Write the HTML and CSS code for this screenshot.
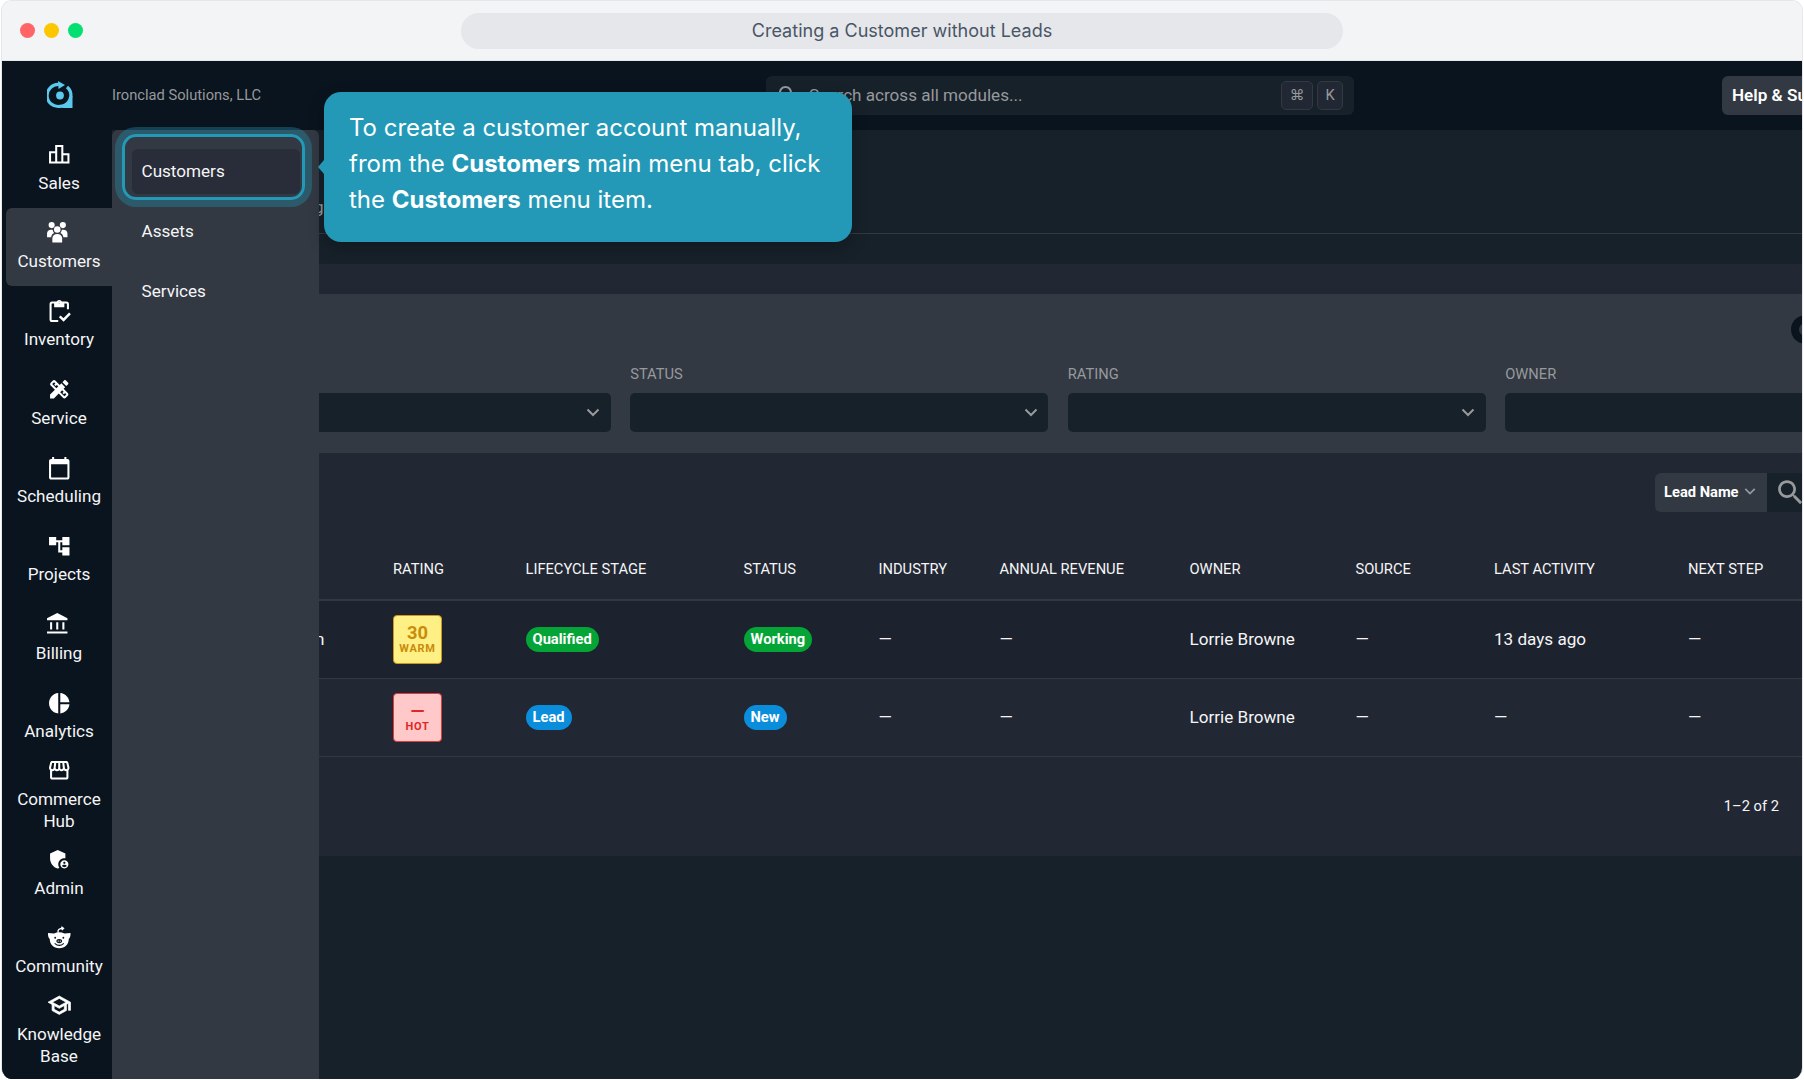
FILE: index.html
```html
<!DOCTYPE html>
<html lang="en">
<head>
  <meta charset="UTF-8" />
  <meta name="viewport" content="width=device-width, initial-scale=1.0" />
  <title>Creating a Customer without Leads</title>
  <link rel="stylesheet" href="styles.css">
</head>
<body>
  <div class="window">
    <div class="titlebar">
      <div class="dots">
        <span class="dot red"></span>
        <span class="dot yellow"></span>
        <span class="dot green"></span>
      </div>
      <div class="address">Creating a Customer without Leads</div>
    </div>

    <div class="app">
      <nav class="sidebar">
        <div class="logo">
          <svg width="26" height="28" viewBox="0 0 26 28">
            <path d="M12 3.500 A11 11 0 1 0 13 25.300 A11 11 0 0 0 20 6" fill="none" stroke="#5bc8ee" stroke-width="3.200" />
            <path d="M11 0 L18 4 L11.500 8 Z" fill="#5bc8ee" />
            <path d="M25.500 15V27H13Q22 25.500 23.500 15z" fill="#5bc8ee" />
            <circle cx="13" cy="14.500" r="3.900" fill="#5bc8ee" />
          </svg>
        </div>
        <a class="nav-item">
          <svg class="icon" viewBox="0 0 24 24"><path d="M16 11V3H8v6H2v12h20V11h-6zm-6-6h4v14h-4V5zm-6 6h4v8H4v-8zm16 8h-4v-6h4v6z" /></svg>
          <span>Sales</span>
        </a>
        <a class="nav-item active">
          <svg class="icon people" viewBox="0 0 24 24">
            <circle cx="6.500" cy="5" r="3" />
            <circle cx="17.500" cy="5" r="3" />
            <path d="M2 17v-3.500C2 11 3.600 9.500 6 9.500h1.500C7.800 11 8.300 12 9 12.700 7 13.500 6.200 15 6 17zM22 17v-3.500c0-2.500-1.600-4-4-4h-1.500c-.3 1.500-.8 2.500-1.500 3.200 2 .8 2.800 2.300 3 4.300z" />
            <circle cx="12" cy="9.200" r="3.200" />
            <path d="M7.200 22v-3.800c0-2.700 1.900-4.400 4.800-4.400s4.800 1.700 4.800 4.400V22z" />
          </svg>
          <span>Customers</span>
        </a>
        <a class="nav-item">
          <svg class="icon" viewBox="0 0 24 24">
            <path d="M11 21.500H5a1.500 1.500 0 0 1-1.500-1.500V5A1.500 1.500 0 0 1 5 3.500h14A1.500 1.500 0 0 1 20.500 5v5" fill="none" stroke="#fff" stroke-width="2" />
            <path d="M7 3.500h2.500a2.500 2.500 0 0 1 5 0H17V8H7zM12 2.500a1 1 0 1 0 0 2 1 1 0 0 0 0-2z" fill-rule="evenodd" />
            <path d="M12.500 17l3.700 3.500 6.300-6.500" fill="none" stroke="#fff" stroke-width="2.400" />
          </svg>
          <span>Inventory</span>
        </a>
        <a class="nav-item">
          <svg class="icon" viewBox="0 0 24 24"><path d="M16.240 11.510l1.570-1.570-3.750-3.750-1.570 1.570-4.140-4.130c-.78-.78-2.050-.78-2.830 0l-1.900 1.900c-.78.78-.78 2.050 0 2.830l4.130 4.130L3 17.250V21h3.750l4.760-4.760 4.130 4.130c.95.95 2.230.6 2.830 0l1.900-1.900c.78-.78.78-2.050 0-2.830l-4.130-4.130zm-7.060-.44L5.040 6.940l1.890-1.900L8.200 6.310 7.020 7.500l1.410 1.410 1.190-1.190 1.450 1.450-1.890 1.900zm7.880 7.890l-4.130-4.130 1.900-1.900 1.450 1.450-1.190 1.190 1.410 1.410 1.190-1.190 1.270 1.270-1.900 1.900zM20.710 7.040c.39-.39.39-1.020 0-1.410l-2.340-2.340c-.47-.47-1.120-.29-1.410 0l-1.830 1.830 3.750 3.750 1.830-1.830z" /></svg>
          <span>Service</span>
        </a>
        <a class="nav-item">
          <svg class="icon" viewBox="0 0 24 24"><path d="M20 3h-1V1h-2v2H7V1H5v2H4c-1.100 0-2 .9-2 2v16c0 1.100.9 2 2 2h16c1.100 0 2-.9 2-2V5c0-1.100-.9-2-2-2zm0 18H4V8h16v13z" /></svg>
          <span>Scheduling</span>
        </a>
        <a class="nav-item">
          <svg class="icon" viewBox="0 0 24 24"><path d="M22 11V3h-7v3H9V3H2v8h7V8h2v10h4v3h7v-8h-7v3h-2V8h2v3z" /></svg>
          <span>Projects</span>
        </a>
        <a class="nav-item">
          <svg class="icon bank" viewBox="0 0 24 24"><path d="M12 2L2 7v2h20V7zM5 11h2v7H5zM11 11h2v7h-2zM17 11h2v7h-2zM2 20h20v2H2z" /></svg>
          <span>Billing</span>
        </a>
        <a class="nav-item">
          <svg class="icon" viewBox="0 0 24 24"><path d="M11 2v20c-5.070-.5-9-4.790-9-10s3.930-9.500 9-10zm2.030 0v8.990H22c-.47-4.740-4.240-8.520-8.970-8.990zm0 11.010V22c4.740-.47 8.500-4.250 8.970-8.990h-8.970z" /></svg>
          <span>Analytics</span>
        </a>
        <a class="nav-item two-line">
          <svg class="icon" viewBox="0 0 24 24"><path d="M21.900 8.890l-1.050-4.370c-.22-.9-1-1.520-1.910-1.520H5.050c-.9 0-1.690.63-1.900 1.520L2.100 8.890c-.24 1.020-.02 2.060.62 2.880.08.11.19.19.28.29V19c0 1.100.9 2 2 2h14c1.100 0 2-.9 2-2v-6.940c.09-.09.2-.18.28-.28.64-.82.87-1.870.62-2.890zm-2.990-3.900l1.050 4.370c.1.42.01.84-.25 1.170-.14.18-.44.47-.94.47-.61 0-1.140-.49-1.210-1.140L16.980 5l1.930-.01zM13 5h1.960l.54 4.520c.05.39-.07.78-.33 1.070-.22.26-.54.41-.95.41-.67 0-1.220-.59-1.220-1.310V5zM8.490 9.520L9.040 5H11v4.690c0 .72-.55 1.310-1.290 1.310-.34 0-.65-.15-.89-.41-.25-.29-.37-.68-.33-1.070zm-4.450-.16L5.050 5h1.970l-.58 4.860c-.08.65-.6 1.140-1.210 1.140-.49 0-.8-.29-.93-.47-.27-.32-.36-.75-.26-1.170zM5 19v-6.030c.08.010.15.030.23.030.87 0 1.660-.36 2.240-.95.6.6 1.400.95 2.310.95.87 0 1.650-.36 2.230-.93.59.57 1.390.93 2.290.93.84 0 1.640-.35 2.240-.95.58.59 1.370.95 2.240.95.080 0 .15-.02.23-.03V19H5z" /></svg>
          <span>Commerce Hub</span>
        </a>
        <a class="nav-item">
          <svg class="icon" viewBox="0 0 24 24"><path d="M17 11c.34 0 .67.040 1 .09V6.270L10.500 3 3 6.270v4.910c0 4.540 3.200 8.790 7.500 9.820.55-.13 1.080-.32 1.600-.55-.69-.98-1.100-2.170-1.100-3.450 0-3.310 2.690-6 6-6z" /><path d="M17 13c-2.210 0-4 1.790-4 4s1.790 4 4 4 4-1.790 4-4-1.790-4-4-4zm0 1.380c.62 0 1.120.51 1.120 1.120s-.51 1.120-1.120 1.120-1.120-.51-1.120-1.120.5-1.120 1.120-1.120zm0 5.370c-.93 0-1.740-.46-2.240-1.170.05-.72 1.510-1.080 2.240-1.080s2.190.36 2.240 1.080c-.5.71-1.310 1.170-2.240 1.170z" /></svg>
          <span>Admin</span>
        </a>
        <a class="nav-item">
          <svg class="icon" viewBox="0 0 24 24">
            <path d="M1 6.800l6 .5c3-1.600 7-1.600 10 0l6-.5c.2 2.700-.4 4.700-1.700 6 .2 5-3.800 9-9.300 9s-9.500-4-9.300-9c-1.300-1.300-1.900-3.300-1.700-6z" />
            <path d="M11 6.500C10 4 12 2.300 15.500 2.200M14 .7l2.200 1.500L14.500 4" fill="none" stroke="#fff" stroke-width="1.300" />
            <circle cx="8" cy="11.500" r=".9" fill="#0a141e" />
            <circle cx="16" cy="11.500" r=".9" fill="#0a141e" />
            <ellipse cx="12" cy="14.800" rx="2.800" ry="2" fill="#0a141e" />
            <circle cx="11" cy="14.800" r=".7" />
            <circle cx="13" cy="14.800" r=".7" />
            <path d="M7.500 17q4.500 4 9 0" fill="none" stroke="#0a141e" stroke-width="1" />
          </svg>
          <span>Community</span>
        </a>
        <a class="nav-item two-line">
          <svg class="icon cap" viewBox="0 0 24 24"><path d="M12 3L1 9l4 2.180v6L12 21l7-3.820v-6l2-1.090V17h2V9L12 3zm6.820 6L12 12.720 5.180 9 12 5.280 18.820 9zM17 15.990l-5 2.730-5-2.730v-3.720L12 15l5-2.730v3.720z" /></svg>
          <span>Knowledge Base</span>
        </a>
      </nav>

      <div class="main">
        <header class="topbar">
          <div class="company">Ironclad Solutions, LLC</div>
          <div class="search">
            <svg class="search-icon" viewBox="0 0 24 24"><path d="M15.500 14h-.79l-.28-.27C15.410 12.590 16 11.110 16 9.500 16 5.910 13.090 3 9.500 3S3 5.910 3 9.500 5.910 16 9.500 16c1.610 0 3.090-.59 4.230-1.570l.27.28v.79l5 4.990L20.490 19l-4.990-5zm-6 0C7.010 14 5 11.990 5 9.500S7.010 5 9.500 5 14 7.010 14 9.500 11.990 14 9.500 14z" /></svg>
            <span class="placeholder">Search across all modules...</span>
            <kbd class="cmd">⌘</kbd>
            <kbd>K</kbd>
          </div>
          <button class="help">Help &amp; Support</button>
        </header>

        <div class="tabs"><span>Manage</span></div>
        <div class="strip"></div>

        <section class="panel">
          <div class="filters">
            <div class="panel-head"><span class="round"></span></div>
            <div class="fields">
              <div class="field">
                <label>&nbsp;</label>
                <div class="select"><svg class="chevron" viewBox="0 0 14 9"><path d="M1.500 1.500L7 7l5.500-5.500" /></svg></div>
              </div>
              <div class="field">
                <label>STATUS</label>
                <div class="select"><svg class="chevron" viewBox="0 0 14 9"><path d="M1.500 1.500L7 7l5.500-5.500" /></svg></div>
              </div>
              <div class="field">
                <label>RATING</label>
                <div class="select"><svg class="chevron" viewBox="0 0 14 9"><path d="M1.500 1.500L7 7l5.500-5.500" /></svg></div>
              </div>
              <div class="field">
                <label>OWNER</label>
                <div class="select"></div>
              </div>
            </div>
          </div>

          <div class="toolbar">
            <div class="search-by">Lead Name <svg class="chevron" viewBox="0 0 14 9"><path d="M1.500 1.500L7 7l5.500-5.500" /></svg></div>
            <div class="search-box">
              <svg viewBox="0 0 24 24"><path d="M15.500 14h-.79l-.28-.27C15.410 12.590 16 11.110 16 9.500 16 5.910 13.090 3 9.500 3S3 5.910 3 9.500 5.910 16 9.500 16c1.610 0 3.090-.59 4.230-1.570l.27.28v.79l5 4.990L20.490 19l-4.990-5zm-6 0C7.010 14 5 11.990 5 9.500S7.010 5 9.500 5 14 7.010 14 9.500 11.990 14 9.500 14z" /></svg>
            </div>
          </div>

          <div class="table">
            <div class="row head">
              <span></span><span>RATING</span><span>LIFECYCLE STAGE</span><span>STATUS</span><span>INDUSTRY</span><span>ANNUAL REVENUE</span><span>OWNER</span><span>SOURCE</span><span>LAST ACTIVITY</span><span>NEXT STEP</span>
            </div>
            <div class="row odd">
              <span class="name">n</span>
              <span><b class="score warm"><i>30</i><em>WARM</em></b></span>
              <span><b class="pill ok">Qualified</b></span>
              <span><b class="pill ok">Working</b></span>
              <span class="text">—</span>
              <span class="text">—</span>
              <span class="text">Lorrie Browne</span>
              <span class="text">—</span>
              <span class="text">13 days ago</span>
              <span class="text">—</span>
            </div>
            <div class="row">
              <span class="name"></span>
              <span><b class="score hot"><i>—</i><em>HOT</em></b></span>
              <span><b class="pill info">Lead</b></span>
              <span><b class="pill info">New</b></span>
              <span class="text">—</span>
              <span class="text">—</span>
              <span class="text">Lorrie Browne</span>
              <span class="text">—</span>
              <span class="text">—</span>
              <span class="text">—</span>
            </div>
          </div>
          <div class="pager">1–2 of 2</div>
        </section>

        <!-- Customers submenu, opens over the page -->
        <div class="submenu">
          <a class="hover">Customers</a>
          <a>Assets</a>
          <a>Services</a>
        </div>
        <div class="highlight"></div>
        <div class="callout">To create a customer account manually, from the <b>Customers</b> main menu tab, click the <b>Customers</b> menu item.</div>
      </div>
    </div>
  </div>
</body>
</html>
```
FILE: styles.css
```css
* {
  box-sizing: border-box;
}
body {
  margin: 0;
  height: 1080px;
  padding: 0 1px 1px;
  background: #fff;
  font-family: Roboto, sans-serif;
  color: #f5f5f7;
  overflow: hidden;
}
.window {
  height: 1079px;
  border: 1px solid #e5e7eb;
  border-bottom: none;
  border-radius: 11px;
  overflow: hidden;
  display: flex;
  flex-direction: column;
}

/* title bar */
.titlebar {
  height: 60px;
  flex: none;
  background: #f3f4f6;
  border-bottom: 1px solid #e5e7eb;
  display: flex;
  align-items: center;
}
.dots {
  display: flex;
  gap: 9px;
  width: 459px;
  padding-left: 18px;
}
.dot {
  width: 15px;
  height: 15px;
  border-radius: 50%;
}
.red { background: #ff6467; }
.yellow { background: #fdc700; }
.green { background: #05df72; }
.address {
  width: 882px;
  height: 36px;
  border-radius: 18px;
  background: #e5e7eb;
  color: #4a5565;
  font: 18.050px/36px Inter, sans-serif;
  text-align: center;
}

/* sidebar */
.app {
  flex: 1;
  min-height: 0;
  display: flex;
  background: #17212a;
}
.sidebar {
  width: 110px;
  flex: none;
  background: #0a141e;
  padding-left: 4px;
  display: flex;
  flex-direction: column;
}
.logo {
  height: 68.700px;
  flex: none;
  padding: 20px 0 0 41px;
}
.nav-item {
  height: 78.350px;
  flex: none;
  padding: 12.500px 0 0;
  display: flex;
  flex-direction: column;
  align-items: center;
  text-align: center;
  font-size: 17.100px;
  line-height: 22.500px;
}
.nav-item span {
  margin-top: 5px;
  width: 100px;
}
.nav-item.two-line {
  padding-top: 2px;
}
.nav-item.active {
  background: #323943;
  border-radius: 6px 0 0 6px;
}
.icon {
  width: 24.500px;
  height: 24.500px;
  flex: none;
  fill: #fff;
}
.people,
.bank {
  position: relative;
  left: -2px;
  top: -1px;
}
.cap {
  stroke: #fff;
  stroke-width: 0.700;
}

/* top bar */
.main {
  position: relative;
  flex: 1;
  min-width: 0;
  overflow: hidden;
}
.topbar {
  height: 69px;
  background: #0a141e;
  display: flex;
  align-items: center;
}
.company {
  width: 654px;
  flex: none;
  padding-bottom: 2px;
  font-size: 14.700px;
  color: #97999c;
}
.search {
  width: 588px;
  height: 39px;
  flex: none;
  padding: 0 9px 0 10px;
  border-radius: 6px;
  background: #17212a;
  color: #97999c;
  display: flex;
  align-items: center;
  font-size: 17.100px;
  margin-top: -1px;
}
.search-icon {
  width: 24px;
  height: 24px;
  fill: #97999c;
}
.placeholder {
  flex: 1;
  padding-left: 9px;
}
kbd {
  height: 29px;
  width: 26px;
  margin-left: 4px;
  position: relative;
  left: -2px;
  border: 1px solid #323943;
  border-radius: 5px;
  background: #222833;
  font: 14.700px/27px Roboto, sans-serif;
  text-align: center;
}
kbd.cmd {
  width: 32px;
  font-family: Roboto, Inter, "DejaVu Sans", sans-serif;
}
.help {
  margin: -1px 0 0 368px;
  height: 39px;
  width: 132px;
  flex: none;
  padding: 0 0 0 10px;
  border: none;
  border-radius: 6px;
  background: #323943;
  color: #fff;
  font: 600 17.100px Roboto, sans-serif;
  text-align: left;
  white-space: nowrap;
}

/* page */
.tabs {
  height: 104px;
  border-bottom: 1px solid #323943;
  padding: 66px 0 0 159px;
  font-size: 17.100px;
  line-height: 22px;
  color: #97999c;
}
.strip {
  height: 30px;
}
.panel {
  height: 592px;
  padding-top: 30px;
  background: #222833;
}
.filters {
  height: 159px;
  background: #323943;
}
.panel-head {
  height: 69px;
  padding: 21px 0 0 1679px;
}
.round {
  display: block;
  width: 29px;
  height: 29px;
  border: 8px solid #0a141e;
  border-radius: 50%;
}
.fields {
  display: flex;
  gap: 19.500px;
  padding-left: 80.700px;
}
.field {
  width: 418px;
  flex: none;
}
.field label {
  display: block;
  height: 30px;
  line-height: 23px;
  font-size: 14.700px;
  color: #97999c;
}
.select {
  height: 39px;
  padding-right: 10.500px;
  border-radius: 5px;
  background: #17212a;
  display: flex;
  align-items: center;
  justify-content: flex-end;
}
.chevron {
  width: 14px;
  height: 9px;
  fill: none;
  stroke: #97999c;
  stroke-width: 2;
}
.toolbar {
  display: flex;
  justify-content: flex-end;
  padding-top: 19.500px;
}
.search-by {
  width: 112px;
  height: 39px;
  padding: 0 0 1px 9px;
  border-radius: 6px 0 0 6px;
  background: #323943;
  color: #fff;
  display: flex;
  align-items: center;
  gap: 5px;
  font-size: 14.700px;
  font-weight: 700;
  white-space: nowrap;
}
.search-by .chevron {
  width: 12px;
}
.search-box {
  width: 35px;
  height: 39px;
  background: #17212a;
  overflow: hidden;
}
.search-box svg {
  width: 33px;
  height: 33px;
  margin: 3px 0 0 7px;
  fill: #97999c;
}

/* leads table */
.row {
  height: 78px;
  display: grid;
  grid-template-columns: 281px 132.500px 218px 135px 121px 190px 166px 138.500px 194px 1fr;
  align-items: center;
  border-bottom: 1px solid #323943;
  font-size: 17.100px;
}
.row.head {
  height: 89.500px;
  padding-top: 28px;
  border-bottom-width: 2px;
  font-size: 14.700px;
}
.row.odd {
  background: #1d232e;
}
.text {
  padding-bottom: 2px;
}
.name {
  padding: 0 0 2px 203px;
}
.score {
  width: 49px;
  height: 49px;
  border: 1px solid;
  border-radius: 4px;
  display: flex;
  flex-direction: column;
  align-items: center;
  padding-top: 8px;
}
.score i {
  font: 700 18.300px/18px Roboto, sans-serif;
}
.score em {
  font: 700 11px/14px Roboto, sans-serif;
  letter-spacing: 0.700px;
}
.warm {
  background: #fff085;
  color: #c98c0a;
  border-color: #d0961a;
}
.hot {
  background: #ffc9c9;
  color: #dd2828;
  border-color: #e03a3a;
}
.pill {
  display: block;
  width: fit-content;
  height: 25px;
  padding: 0 7px;
  border-radius: 13px;
  color: #fff;
  font-size: 14.700px;
  line-height: 25px;
}
.ok { background: #05a436; }
.info { background: #0a8ddb; }
.pager {
  padding: 38px 23px 0 0;
  text-align: right;
  font-size: 14.700px;
  line-height: 22px;
}

/* submenu and tour step */
.submenu {
  position: absolute;
  left: 0;
  top: 69px;
  bottom: 0;
  width: 207px;
  padding: 19px 19px 0 20px;
  border-radius: 6px 6px 0 0;
  background: #323943;
  display: flex;
  flex-direction: column;
  gap: 15px;
}
.submenu a {
  height: 45px;
  padding-left: 9.500px;
  border-radius: 6px;
  font-size: 17.100px;
  line-height: 45px;
}
.submenu .hover {
  background: #282d39;
}
.highlight {
  position: absolute;
  left: 10px;
  top: 73px;
  width: 183px;
  height: 66px;
  border: 3px solid #2399b7;
  border-radius: 14px;
  box-shadow: 0 0 0 7px rgba(35, 153, 183, 0.350);
}
.callout {
  position: absolute;
  left: 212px;
  top: 31px;
  width: 528px;
  height: 150px;
  padding: 18px 25px;
  border-radius: 17px;
  background: #2399b7;
  color: #fff;
  font: 24px/36px Inter, sans-serif;
  box-shadow: 0 6px 16px rgba(0, 0, 0, 0.250);
}
.callout::before {
  content: "";
  position: absolute;
  left: -6px;
  top: 68px;
  border: 7px solid transparent;
  border-left: none;
  border-right: 6px solid #2399b7;
}
```
